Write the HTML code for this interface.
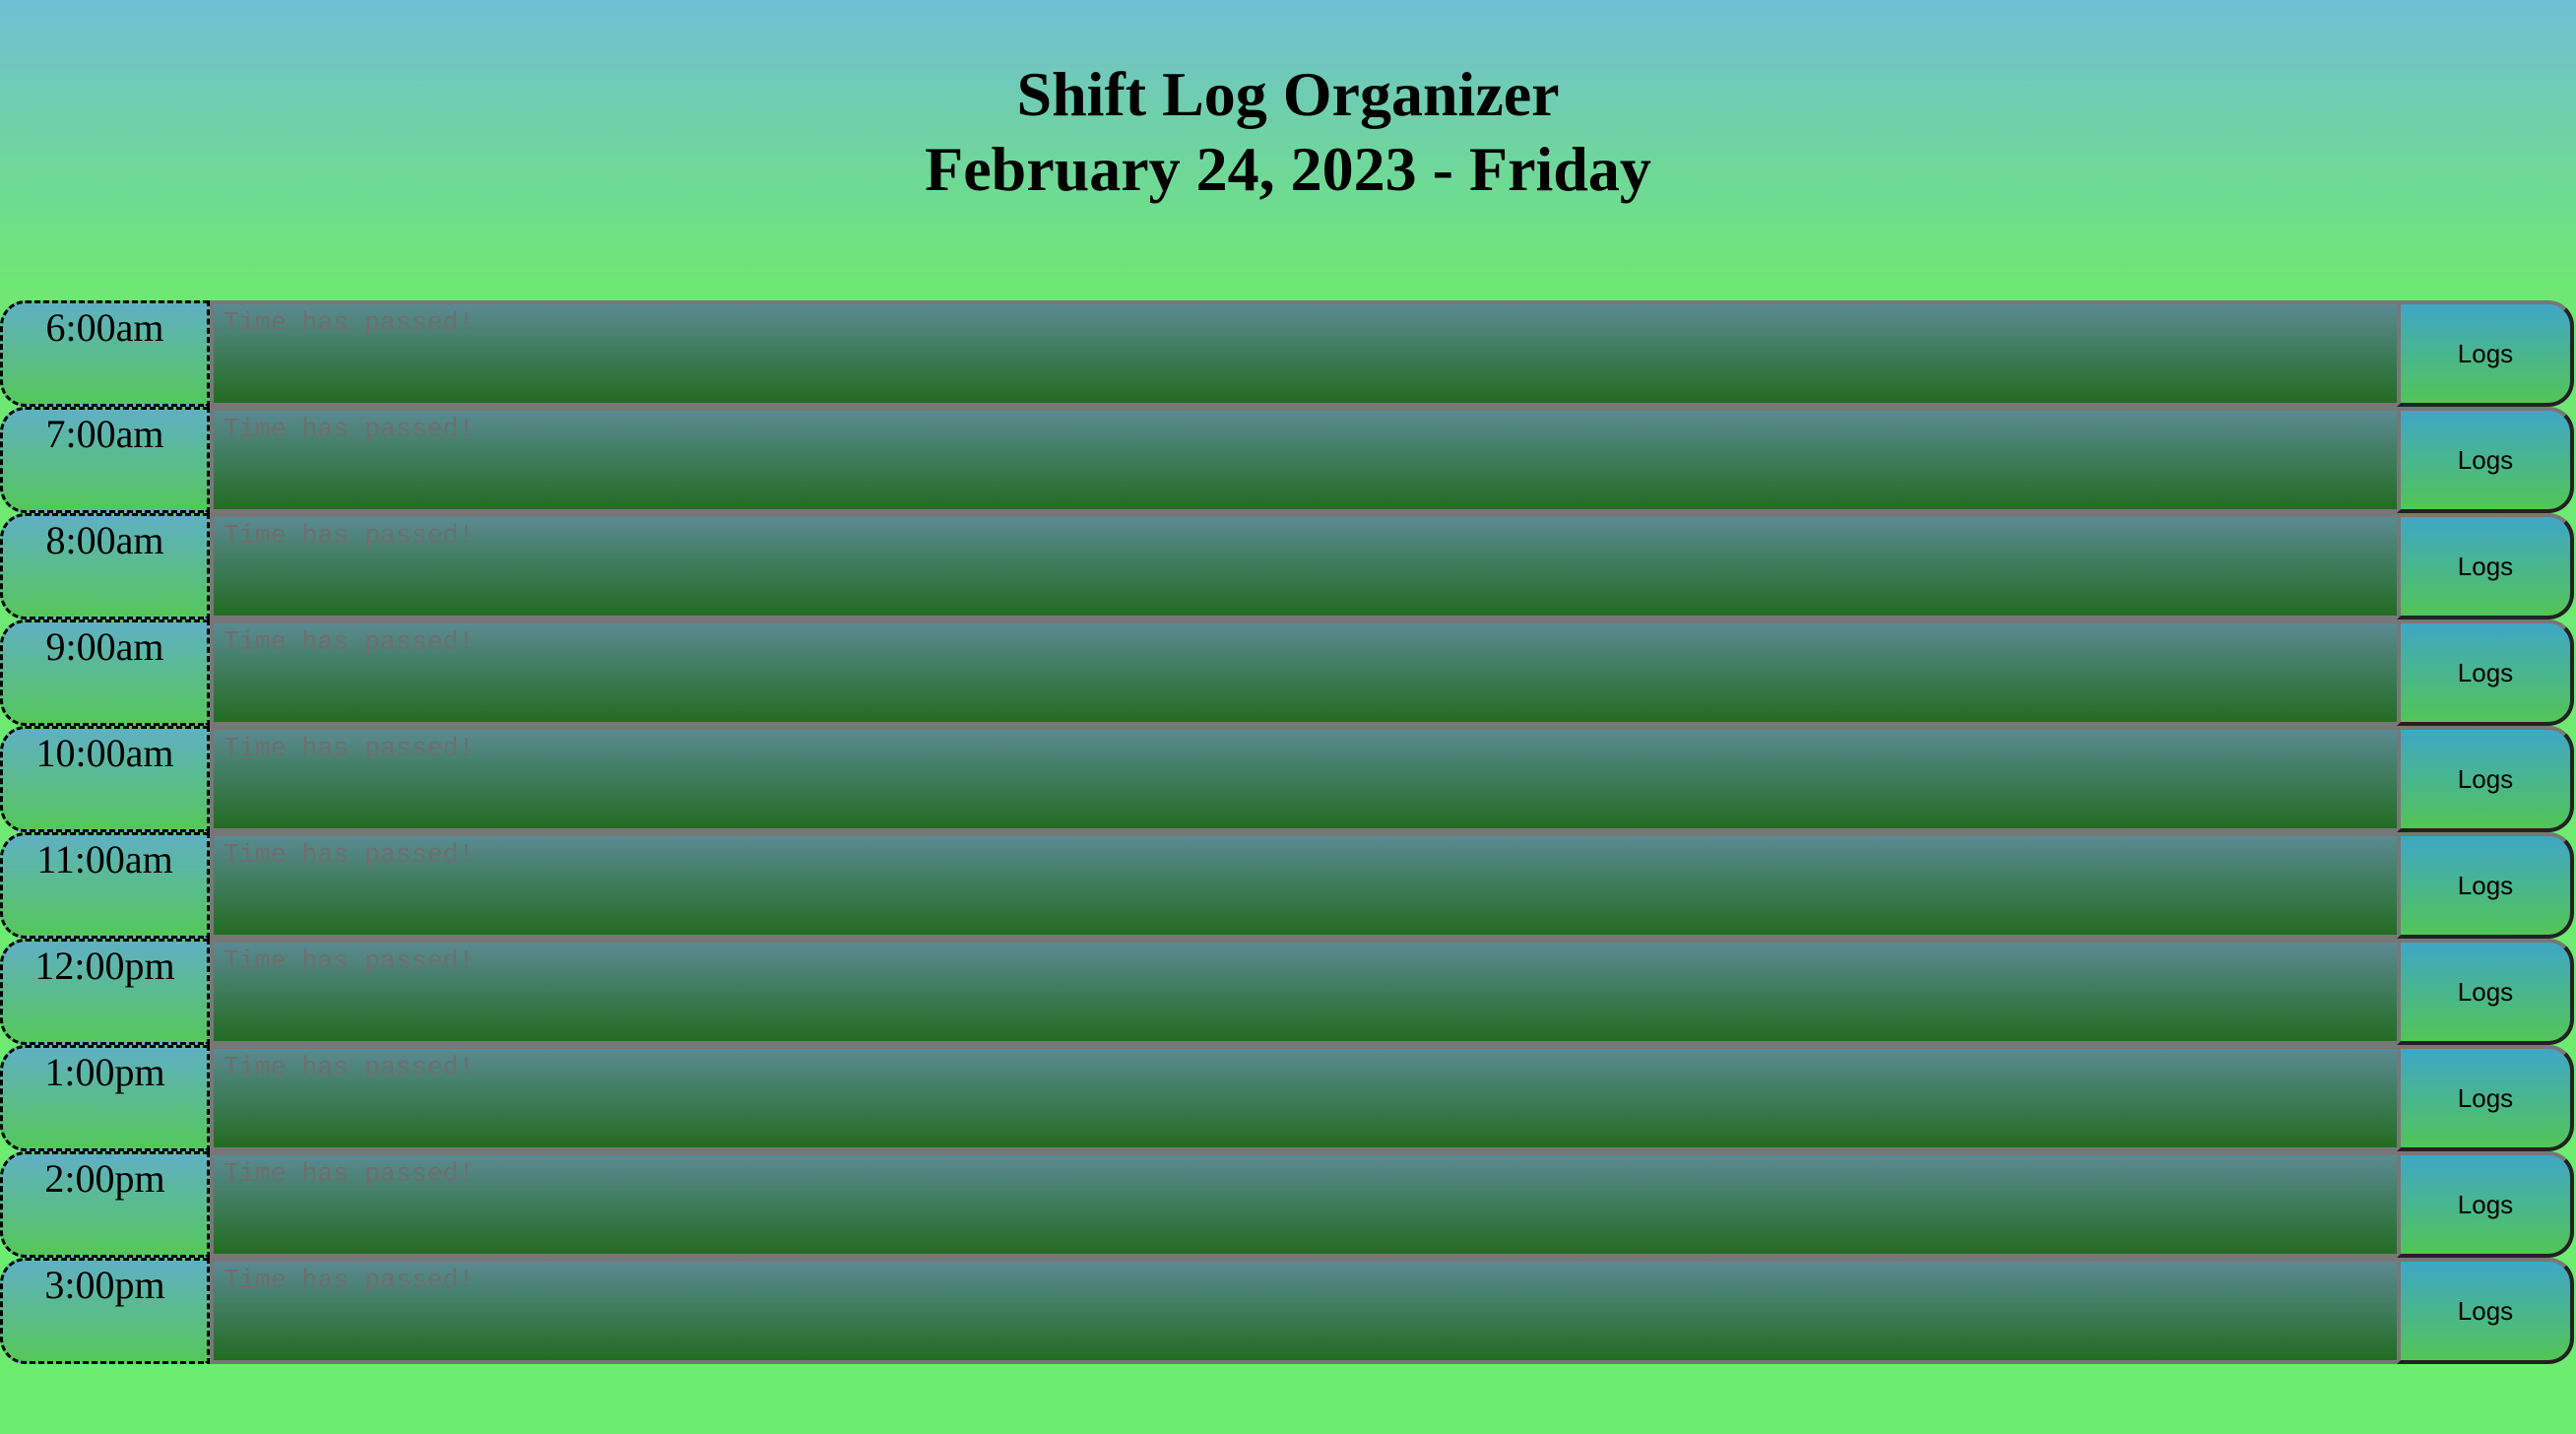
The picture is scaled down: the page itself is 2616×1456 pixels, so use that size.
<!DOCTYPE html>
<html><head><style>
html,body{margin:0;padding:0}
body{width:2616px;height:1456px;overflow:hidden;background:linear-gradient(#70bfd3 0px,#6ee873 290px,#6ded6f 1456px);font-family:"Liberation Serif",serif;position:relative}
h1{margin:0;position:absolute;top:58px;left:0;width:2616px;text-align:center;font-size:64px;line-height:76px;font-weight:bold;color:#000}
.row{position:absolute;left:0;width:2616px;height:108px}
.time{position:absolute;left:0;top:0;width:207px;height:102px;border:3px dashed #000;border-radius:26px 0 0 26px;background:linear-gradient(#5fb0c3,#55c75a);text-align:center;font-size:40px;line-height:44px}
.time span{display:block;margin-top:3px}
.ta{position:absolute;left:213px;top:0;height:100px;border:4px solid #777;background:linear-gradient(#5a8a92,#236c22);font-family:"Liberation Mono",monospace;font-size:26.5px;color:#6e6e6e;padding:0 0 0 10px;width:2209px;line-height:38px}
.btn{position:absolute;left:2434px;top:0;width:172px;height:100px;border:4px solid #777;border-right-color:#222;border-bottom-color:#222;border-radius:0 26px 26px 0;background:linear-gradient(#3fa6c6,#52c556);font-family:"Liberation Sans",sans-serif;font-size:26px;text-align:center;line-height:100px;color:#000}
</style></head><body>
<h1>Shift Log Organizer<br>February 24, 2023 - Friday</h1>
<div class="row" style="top:305px"><div class="time"><span>6:00am</span></div><div class="ta">Time has passed!</div><div class="btn">Logs</div></div>
<div class="row" style="top:413px"><div class="time"><span>7:00am</span></div><div class="ta">Time has passed!</div><div class="btn">Logs</div></div>
<div class="row" style="top:521px"><div class="time"><span>8:00am</span></div><div class="ta">Time has passed!</div><div class="btn">Logs</div></div>
<div class="row" style="top:629px"><div class="time"><span>9:00am</span></div><div class="ta">Time has passed!</div><div class="btn">Logs</div></div>
<div class="row" style="top:737px"><div class="time"><span>10:00am</span></div><div class="ta">Time has passed!</div><div class="btn">Logs</div></div>
<div class="row" style="top:845px"><div class="time"><span>11:00am</span></div><div class="ta">Time has passed!</div><div class="btn">Logs</div></div>
<div class="row" style="top:953px"><div class="time"><span>12:00pm</span></div><div class="ta">Time has passed!</div><div class="btn">Logs</div></div>
<div class="row" style="top:1061px"><div class="time"><span>1:00pm</span></div><div class="ta">Time has passed!</div><div class="btn">Logs</div></div>
<div class="row" style="top:1169px"><div class="time"><span>2:00pm</span></div><div class="ta">Time has passed!</div><div class="btn">Logs</div></div>
<div class="row" style="top:1277px"><div class="time"><span>3:00pm</span></div><div class="ta">Time has passed!</div><div class="btn">Logs</div></div>
</body></html>
